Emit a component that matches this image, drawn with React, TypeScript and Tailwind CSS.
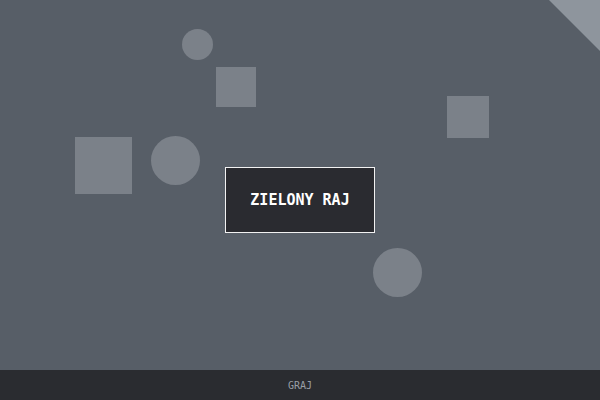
const shapes = [
  { kind: "circle", x: 182, y: 29, size: 31 },
  { kind: "square", x: 216, y: 67, size: 40 },
  { kind: "square", x: 75, y: 137, size: 57 },
  { kind: "circle", x: 151, y: 136, size: 49 },
  { kind: "square", x: 447, y: 96, size: 42 },
  { kind: "circle", x: 373, y: 248, size: 49 },
];

export default function App() {
  return (
    <div
      className="w-[600px] h-[400px] flex flex-col bg-[#575e67] overflow-hidden"
      style={{ fontFamily: '"DejaVu Sans Mono", "Liberation Mono", monospace' }}
    >
      {/* Play field */}
      <div className="relative flex-1 flex items-center justify-center pt-[30px]">
        {shapes.map((s, i) => (
          <div
            key={i}
            className={`absolute bg-[#7b8189] ${s.kind === "circle" ? "rounded-full" : ""}`}
            style={{ left: s.x, top: s.y, width: s.size, height: s.size }}
          />
        ))}

        {/* corner fold */}
        <svg className="absolute top-0 right-0" width="52" height="52" viewBox="0 0 52 52">
          <polygon points="1,0 52,0 52,51" fill="#8e959d" />
        </svg>

        <div className="relative w-[150px] h-[66px] bg-[#2a2b30] border border-[#f2f2f2] flex items-center justify-center">
          <span className="text-[15px] font-bold text-white tracking-normal">ZIELONY RAJ</span>
        </div>
      </div>

      {/* Bottom bar */}
      <div className="h-[30px] bg-[#2a2c30] flex items-center justify-center">
        <span className="text-[10px] text-[#9a9fa6]">GRAJ</span>
      </div>
    </div>
  );
}
